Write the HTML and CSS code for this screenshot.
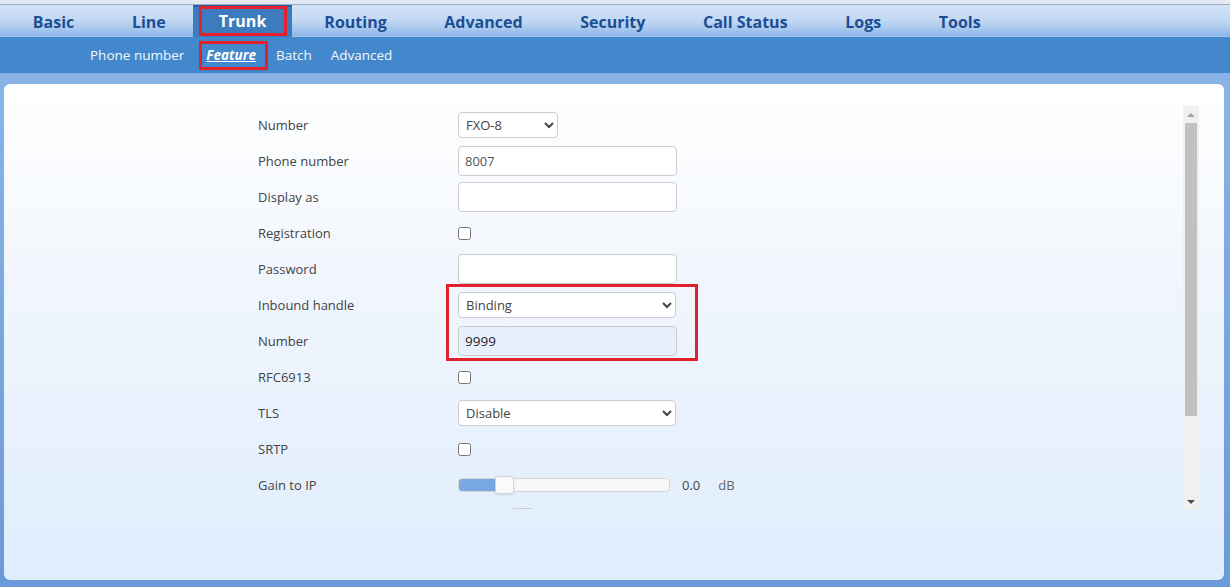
FILE: index.html
```html
<!DOCTYPE html>
<html lang="en">
<head>
  <meta charset="UTF-8">
  <title>Trunk - Feature</title>
  <link rel="stylesheet" href="styles.css">
</head>
<body>

  <div class="topline"></div>

  <!-- main menu -->
  <div class="mainnav">
    <a class="menu">Basic</a>
    <a class="menu">Line</a>
    <a class="menu active"><span class="mark">Trunk</span></a>
    <a class="menu">Routing</a>
    <a class="menu">Advanced</a>
    <a class="menu">Security</a>
    <a class="menu">Call Status</a>
    <a class="menu">Logs</a>
    <a class="menu">Tools</a>
  </div>

  <!-- sub menu -->
  <div class="subnav">
    <a class="sub">Phone number</a>
    <a class="sub current"><span class="mark-sub">Feature</span></a>
    <a class="sub">Batch</a>
    <a class="sub">Advanced</a>
  </div>

  <div class="page">
    <div class="panel">
      <div class="scroll">
        <form class="form">
          <div class="row">
            <label>Number</label>
            <select class="sel small"><option>FXO-8</option></select>
          </div>
          <div class="row">
            <label>Phone number</label>
            <input class="txt" type="text" value="8007">
          </div>
          <div class="row">
            <label>Display as</label>
            <input class="txt" type="text">
          </div>
          <div class="row">
            <label>Registration</label>
            <input class="chk" type="checkbox">
          </div>
          <div class="row">
            <label>Password</label>
            <input class="txt" type="password">
          </div>

          <div class="highlight">
            <div class="row">
              <label>Inbound handle</label>
              <select class="sel wide"><option>Binding</option></select>
            </div>
            <div class="row">
              <label>Number</label>
              <input class="txt locked" type="text" value="9999">
            </div>
            <div class="redbox"></div>
          </div>

          <div class="row">
            <label>RFC6913</label>
            <input class="chk" type="checkbox">
          </div>
          <div class="row">
            <label>TLS</label>
            <select class="sel wide"><option>Disable</option></select>
          </div>
          <div class="row">
            <label>SRTP</label>
            <input class="chk" type="checkbox">
          </div>
          <div class="row">
            <label>Gain to IP</label>
            <div class="slider">
              <div class="fill"></div>
              <div class="knob"></div>
            </div>
            <span class="value">0.0</span>
            <span class="unit">dB</span>
          </div>
          <div class="row cut">
            <label></label>
            <div class="stub"></div>
          </div>
        </form>
      </div>

      <!-- scrollbar of the frame -->
      <div class="scrollbar">
        <div class="sb-btn"><span class="arrow-up"></span></div>
        <div class="sb-thumb"></div>
        <div class="sb-track"></div>
        <div class="sb-btn"><span class="arrow-down"></span></div>
      </div>
    </div>
  </div>

</body>
</html>
```

FILE: styles.css
```css
body {
  margin: 0;
  font-family: "Open Sans", "Liberation Sans", sans-serif;
  background: #6a9ad8;
  overflow: hidden;
}

.topline {
  height: 4px;
  background: #e3eaf3;
  border-bottom: 1px solid #9aabc4;
}

/* main menu */
.mainnav {
  display: flex;
  height: 32px;
  padding-left: 4px;
  background: linear-gradient(#d2e3f7 0%, #c3d9f3 45%, #a9c8ee 75%, #8cb5e7 95%, #a8cbf0 100%);
}
.menu {
  display: flex;
  align-items: center;
  padding: 2px 28.8px 0;
  font-size: 16px;
  font-weight: bold;
  color: #1c4e94;
  cursor: pointer;
}
.menu.active {
  padding: 0 5px 0 6px;
  background: #3d7bbf;
  border-top: 2px solid #2c5fa4;
  color: #fff;
  margin: 0 4px 0 -2px;
}
.mark {
  display: flex;
  align-items: center;
  justify-content: center;
  width: 82px;
  height: 24px;
  border: 3px solid #e5202b;
  margin-top: -2px;
}

/* sub menu */
.subnav {
  display: flex;
  align-items: center;
  height: 36px;
  padding-left: 90px;
  background: #4388cc;
}
.sub {
  font-size: 13.5px;
  color: #f2f7fd;
  margin-right: 19px;
  cursor: pointer;
}
.sub.current {
  margin-left: -4px;
  margin-right: 8px;
}
.mark-sub {
  display: inline-block;
  padding: 2px 9px 3px 4px;
  border: 3px solid #e5202b;
  font-weight: bold;
  font-style: italic;
  text-decoration: underline;
  color: #fff;
}

/* content frame */
.page {
  padding: 11px 6px 7px 4px;
  background: linear-gradient(#8ab4e8, #6a9ad8);
}
.panel {
  display: flex;
  height: 474px;
  padding-top: 22px;
  border-radius: 6px;
  background: linear-gradient(#ffffff 0%, #f1f6fd 40%, #dfedfd 100%);
}
.scroll {
  flex: 1;
  height: 404px;
  overflow: hidden;
}
.form {
  margin: 1px 0 0 254px;
}

.row {
  display: flex;
  align-items: center;
  height: 36px;
}
.row label {
  width: 200px;
  font-size: 13px;
  color: #444;
}

.txt {
  box-sizing: border-box;
  width: 219px;
  height: 30px;
  padding: 0 6px;
  border: 1px solid #ccc;
  border-radius: 4px;
  background: #fff;
  font-family: inherit;
  font-size: 13px;
  color: #555;
}
.txt.locked {
  background: #e8f0fc;
  color: #1e1e1e;
  font-size: 13.5px;
}

.sel {
  box-sizing: border-box;
  height: 26px;
  padding: 0 3px;
  border: 1px solid #ccc;
  border-radius: 4px;
  background: #fff;
  font-family: inherit;
  font-size: 13px;
  color: #444;
}
.sel.small {
  width: 100px;
}
.sel.wide {
  width: 218px;
}

.chk {
  width: 13px;
  height: 13px;
  margin: 0;
}

/* highlighted block */
.highlight {
  position: relative;
}
.redbox {
  position: absolute;
  left: 188px;
  top: -3px;
  width: 246px;
  height: 71px;
  border: 3px solid #e5202b;
  pointer-events: none;
}

/* slider */
.slider {
  position: relative;
  box-sizing: border-box;
  width: 212px;
  height: 14px;
  border: 1px solid #d4d4d4;
  border-radius: 4px;
  background: #f8f8f8;
}
.fill {
  width: 40px;
  height: 100%;
  background: #7aa9e2;
  border-radius: 3px 0 0 3px;
}
.knob {
  position: absolute;
  left: 36px;
  top: -3px;
  box-sizing: border-box;
  width: 19px;
  height: 18px;
  background: #fafafa;
  border: 1px solid #d6d6d6;
  border-radius: 3px;
  box-shadow: 0 1px 3px rgba(0, 0, 0, 0.12);
}
.value {
  margin-left: 12px;
  font-size: 13px;
  color: #444;
}
.unit {
  margin-left: 18px;
  font-size: 13px;
  color: #666;
}

.row.cut {
  align-items: flex-start;
}
.stub {
  width: 18px;
  height: 1px;
  margin: 5px 0 0 55px;
  background: #c8ccd2;
}

/* fake scrollbar */
.scrollbar {
  display: flex;
  flex-direction: column;
  width: 16px;
  height: 404px;
  margin-right: 25px;
  background: #f0f0f0;
}
.sb-btn {
  display: flex;
  align-items: center;
  justify-content: center;
  height: 17px;
}
.arrow-up {
  width: 0;
  height: 0;
  border-left: 4px solid transparent;
  border-right: 4px solid transparent;
  border-bottom: 4px solid #a3a3a3;
}
.arrow-down {
  width: 0;
  height: 0;
  border-left: 4px solid transparent;
  border-right: 4px solid transparent;
  border-top: 4px solid #505050;
}
.sb-thumb {
  height: 293px;
  margin: 0 2px;
  background: #c1c1c1;
}
.sb-track {
  flex: 1;
}
```
